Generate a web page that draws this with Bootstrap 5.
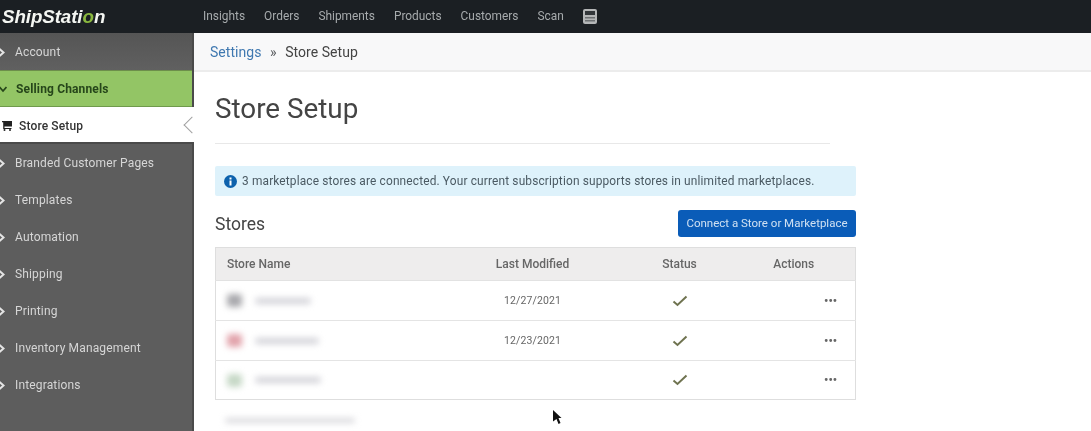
<!DOCTYPE html>
<html lang="en">
<head>
<meta charset="utf-8">
<title>Store Setup</title>
<link rel="stylesheet" href="https://cdn.jsdelivr.net/npm/bootstrap@5.3.0/dist/css/bootstrap.min.css">
<style>
html,body{height:431px;overflow:hidden}
body{font-family:Roboto,"Liberation Sans",sans-serif;background:#fff;color:#444}
.shell{height:431px;display:flex;flex-direction:column;filter:blur(.5px)}
.topbar{height:33px;flex:none;background:#1b1f23;padding:0;flex-wrap:nowrap;justify-content:flex-start}
.brand-logo{width:193px;padding:0 0 0 2px;margin:0;font:italic bold 18.800px/33px "Liberation Sans",sans-serif;color:#f4f6f2;letter-spacing:-.1px}
.brand-logo:hover{color:#f4f6f2}
.brand-logo span{color:#8ab83f}
.top-links{flex-direction:row;gap:19px;padding-left:10px;align-items:center}
.top-links .nav-link{padding:0;font-size:11.900px;color:#a7abad;line-height:33px}
.body-row{flex:1;display:flex;min-height:0}
.side{width:194px;flex:none;background:#5d5d5d;border-right:2px solid #4a4a4a;display:block;padding:0}
.side-item{height:37px;padding-top:1px;display:flex;align-items:center;gap:8px;font-size:12px;color:#d6d6d6;position:relative;letter-spacing:.15px}
.side-item svg{margin-left:-4px;flex:none}
.side-top{background:linear-gradient(#555,#606060)}
.side-open{background:#93c565;color:#26461a;font-weight:700;border-top:1px solid #6d8f4b;border-bottom:1px solid #6f9a4c;gap:9px}
.side-open svg{margin-left:-1px}
.side-cur{background:#fff;color:#333;font-weight:500;border-bottom:2px solid #4a4a4a;margin-right:-2px;gap:7px;padding-top:3px}
.side-cur svg{margin-left:2px}
.notch{position:absolute;right:-3.500px;top:12px;width:12px;height:12px;background:#fff;border-left:1px solid #a0a0a0;border-bottom:1px solid #a0a0a0;transform:rotate(45deg)}
.main-col{flex:1;min-width:0;position:relative}
.crumb-band{height:39px;background:#f8f8f9;border-bottom:2px solid #ececec;padding:2px 0 0 16px;display:flex;align-items:center}
.crumb-band .breadcrumb{--bs-breadcrumb-divider:"»";--bs-breadcrumb-margin-bottom:0;--bs-breadcrumb-item-padding-x:8.500px;font-size:14px;letter-spacing:.05px}
.crumb-band a{color:#3f78b0;text-decoration:none}
.crumb-band .breadcrumb-item.active{color:#444}
.page-pane{width:641px;margin-left:21px}
.page-title{font-size:27.800px;font-weight:400;line-height:33px;color:#444;margin:20px 0 0}
.page-rule{margin:18px 0 0;width:615px;border-top:1px solid #e8e8e8;opacity:1}
.note{margin:22px 0 0;padding:1px 0 0 9px;height:30px;background:#def2fb;border:0;border-radius:2px;display:flex;align-items:center;gap:5px;font-size:11.900px;color:#4b5a63;letter-spacing:.15px}
.stores-head{height:27px;margin-top:14px;display:flex;justify-content:space-between;align-items:center}
.stores-head h2{font-size:17.500px;font-weight:400;margin:0;padding-top:2px;color:#444}
.connect{font-size:11.500px;padding:0;width:178px;height:27px;line-height:27px;background:#0a5cb8;border:0;border-radius:3px;color:#cfe0f2}
.store-table{margin:10px 0 0;table-layout:fixed;border:1px solid #dedede;width:640px}
.store-table th{height:33px;background:#eeeded;font-size:12px;font-weight:500;color:#666;padding:0 11px;vertical-align:middle;border-bottom:1px solid #e2e2e2}
.store-table td{height:40px;padding:0 11px;vertical-align:middle;color:#666;font-size:10.500px;border-bottom:1px solid #e4e4e4;letter-spacing:.1px}
.store-table tr:last-child td{border-bottom:0;height:39px}
.blur-row{display:flex;align-items:center;gap:13px}
.blur-ico{width:15px;height:13px;border-radius:3px;filter:blur(3px)}
.blur-txt{height:6px;border-radius:3px;background:#d2d2d8;filter:blur(3px)}
.tick{display:block;margin:0 auto}
.dots{text-align:right;padding-right:18px!important;font-weight:700;color:#555;font-size:12px!important;letter-spacing:0!important}
.below{height:5px;width:130px;margin:18px 0 0 10px;background:#d9d9dd;border-radius:3px;filter:blur(3px)}
.pointer{position:absolute;left:359px;top:377px}
</style>
</head>
<body>
<div class="shell">
  <nav class="navbar topbar">
    <a class="navbar-brand brand-logo" href="#">ShipStati<span>o</span>n</a>
    <ul class="navbar-nav top-links">
      <li class="nav-item"><a class="nav-link" href="#">Insights</a></li>
      <li class="nav-item"><a class="nav-link" href="#">Orders</a></li>
      <li class="nav-item"><a class="nav-link" href="#">Shipments</a></li>
      <li class="nav-item"><a class="nav-link" href="#">Products</a></li>
      <li class="nav-item"><a class="nav-link" href="#">Customers</a></li>
      <li class="nav-item"><a class="nav-link" href="#">Scan</a></li>
      <li class="nav-item d-flex">
        <svg width="14" height="15" viewBox="0 0 14 15"><rect width="14" height="15" rx="2" fill="#b4b6b7"/><rect x="2" y="2" width="10" height="4" fill="#33373a"/><rect x="2" y="8" width="10" height="1.500" fill="#6d7072"/><rect x="2" y="11" width="10" height="1.500" fill="#6d7072"/></svg>
      </li>
    </ul>
  </nav>
  <div class="body-row">
    <div class="side">
      <div class="side-item side-top"><svg width="11" height="11" viewBox="0 0 11 11"><path d="M3 1.500 7.500 5.500 3 9.500" fill="none" stroke="#e4e4e4" stroke-width="2"/></svg>Account</div>
      <div class="side-item side-open"><svg width="8" height="8" viewBox="0 0 8 8"><path d="M.5 2 4 6 7.500 2" fill="none" stroke="#26461a" stroke-width="1.800"/></svg>Selling Channels</div>
      <div class="side-item side-cur"><svg width="10" height="10" viewBox="0 0 10 10"><path d="M0 0h10v5.500H2.500v1.500H9.500V8H1.200V1.200H0z" fill="#222"/><circle cx="2.500" cy="9" r="1" fill="#222"/><circle cx="8" cy="9" r="1" fill="#222"/></svg>Store Setup<span class="notch"></span></div>
      <div class="side-item"><svg width="11" height="11" viewBox="0 0 11 11"><path d="M3 1.500 7.500 5.500 3 9.500" fill="none" stroke="#e4e4e4" stroke-width="2"/></svg>Branded Customer Pages</div>
      <div class="side-item"><svg width="11" height="11" viewBox="0 0 11 11"><path d="M3 1.500 7.500 5.500 3 9.500" fill="none" stroke="#e4e4e4" stroke-width="2"/></svg>Templates</div>
      <div class="side-item"><svg width="11" height="11" viewBox="0 0 11 11"><path d="M3 1.500 7.500 5.500 3 9.500" fill="none" stroke="#e4e4e4" stroke-width="2"/></svg>Automation</div>
      <div class="side-item"><svg width="11" height="11" viewBox="0 0 11 11"><path d="M3 1.500 7.500 5.500 3 9.500" fill="none" stroke="#e4e4e4" stroke-width="2"/></svg>Shipping</div>
      <div class="side-item"><svg width="11" height="11" viewBox="0 0 11 11"><path d="M3 1.500 7.500 5.500 3 9.500" fill="none" stroke="#e4e4e4" stroke-width="2"/></svg>Printing</div>
      <div class="side-item"><svg width="11" height="11" viewBox="0 0 11 11"><path d="M3 1.500 7.500 5.500 3 9.500" fill="none" stroke="#e4e4e4" stroke-width="2"/></svg>Inventory Management</div>
      <div class="side-item"><svg width="11" height="11" viewBox="0 0 11 11"><path d="M3 1.500 7.500 5.500 3 9.500" fill="none" stroke="#e4e4e4" stroke-width="2"/></svg>Integrations</div>
    </div>
    <div class="main-col">
      <div class="crumb-band">
        <ol class="breadcrumb">
          <li class="breadcrumb-item"><a href="#">Settings</a></li>
          <li class="breadcrumb-item active">Store Setup</li>
        </ol>
      </div>
      <div class="page-pane">
        <h1 class="page-title">Store Setup</h1>
        <hr class="page-rule">
        <div class="alert note" role="alert">
          <svg width="13" height="13" viewBox="0 0 13 13"><circle cx="6.500" cy="6.500" r="6.500" fill="#0d62ad"/><rect x="5.500" y="5.500" width="2" height="5" fill="#fff"/><rect x="5.500" y="2.500" width="2" height="2" fill="#fff"/></svg>
          <span>3 marketplace stores are connected. Your current subscription supports stores in unlimited marketplaces.</span>
        </div>
        <div class="stores-head">
          <h2>Stores</h2>
          <button type="button" class="btn btn-primary connect">Connect a Store or Marketplace</button>
        </div>
        <table class="table store-table">
          <colgroup><col style="width:223px"><col style="width:188px"><col style="width:106px"><col style="width:123px"></colgroup>
          <thead>
            <tr><th>Store Name</th><th class="text-center">Last Modified</th><th class="text-center">Status</th><th class="text-center">Actions</th></tr>
          </thead>
          <tbody>
            <tr>
              <td><div class="blur-row"><span class="blur-ico" style="background:#a9a9ad"></span><span class="blur-txt" style="width:56px"></span></div></td>
              <td class="text-center">12/27/2021</td>
              <td><svg class="tick" width="16" height="12" viewBox="0 0 16 12"><path d="M1.500 6.500 5.500 10 14.500 1.500" fill="none" stroke="#6f7350" stroke-width="2"/></svg></td>
              <td class="dots">•••</td>
            </tr>
            <tr>
              <td><div class="blur-row"><span class="blur-ico" style="background:#e2a3ab"></span><span class="blur-txt" style="width:64px"></span></div></td>
              <td class="text-center">12/23/2021</td>
              <td><svg class="tick" width="16" height="12" viewBox="0 0 16 12"><path d="M1.500 6.500 5.500 10 14.500 1.500" fill="none" stroke="#6f7350" stroke-width="2"/></svg></td>
              <td class="dots">•••</td>
            </tr>
            <tr>
              <td><div class="blur-row"><span class="blur-ico" style="background:#c6d8c6"></span><span class="blur-txt" style="width:66px"></span></div></td>
              <td></td>
              <td><svg class="tick" width="16" height="12" viewBox="0 0 16 12"><path d="M1.500 6.500 5.500 10 14.500 1.500" fill="none" stroke="#6f7350" stroke-width="2"/></svg></td>
              <td class="dots">•••</td>
            </tr>
          </tbody>
        </table>
        <div class="below"></div>
      </div>
      <svg class="pointer" width="10" height="15" viewBox="0 0 10 15"><path d="M0 0 8.500 8H5.500L7.500 13 5.500 14 3.500 9 0 11.500z" fill="#111"/></svg>
    </div>
  </div>
</div>
<script src="https://cdn.jsdelivr.net/npm/bootstrap@5.3.0/dist/js/bootstrap.bundle.min.js"></script>
</body>
</html>
